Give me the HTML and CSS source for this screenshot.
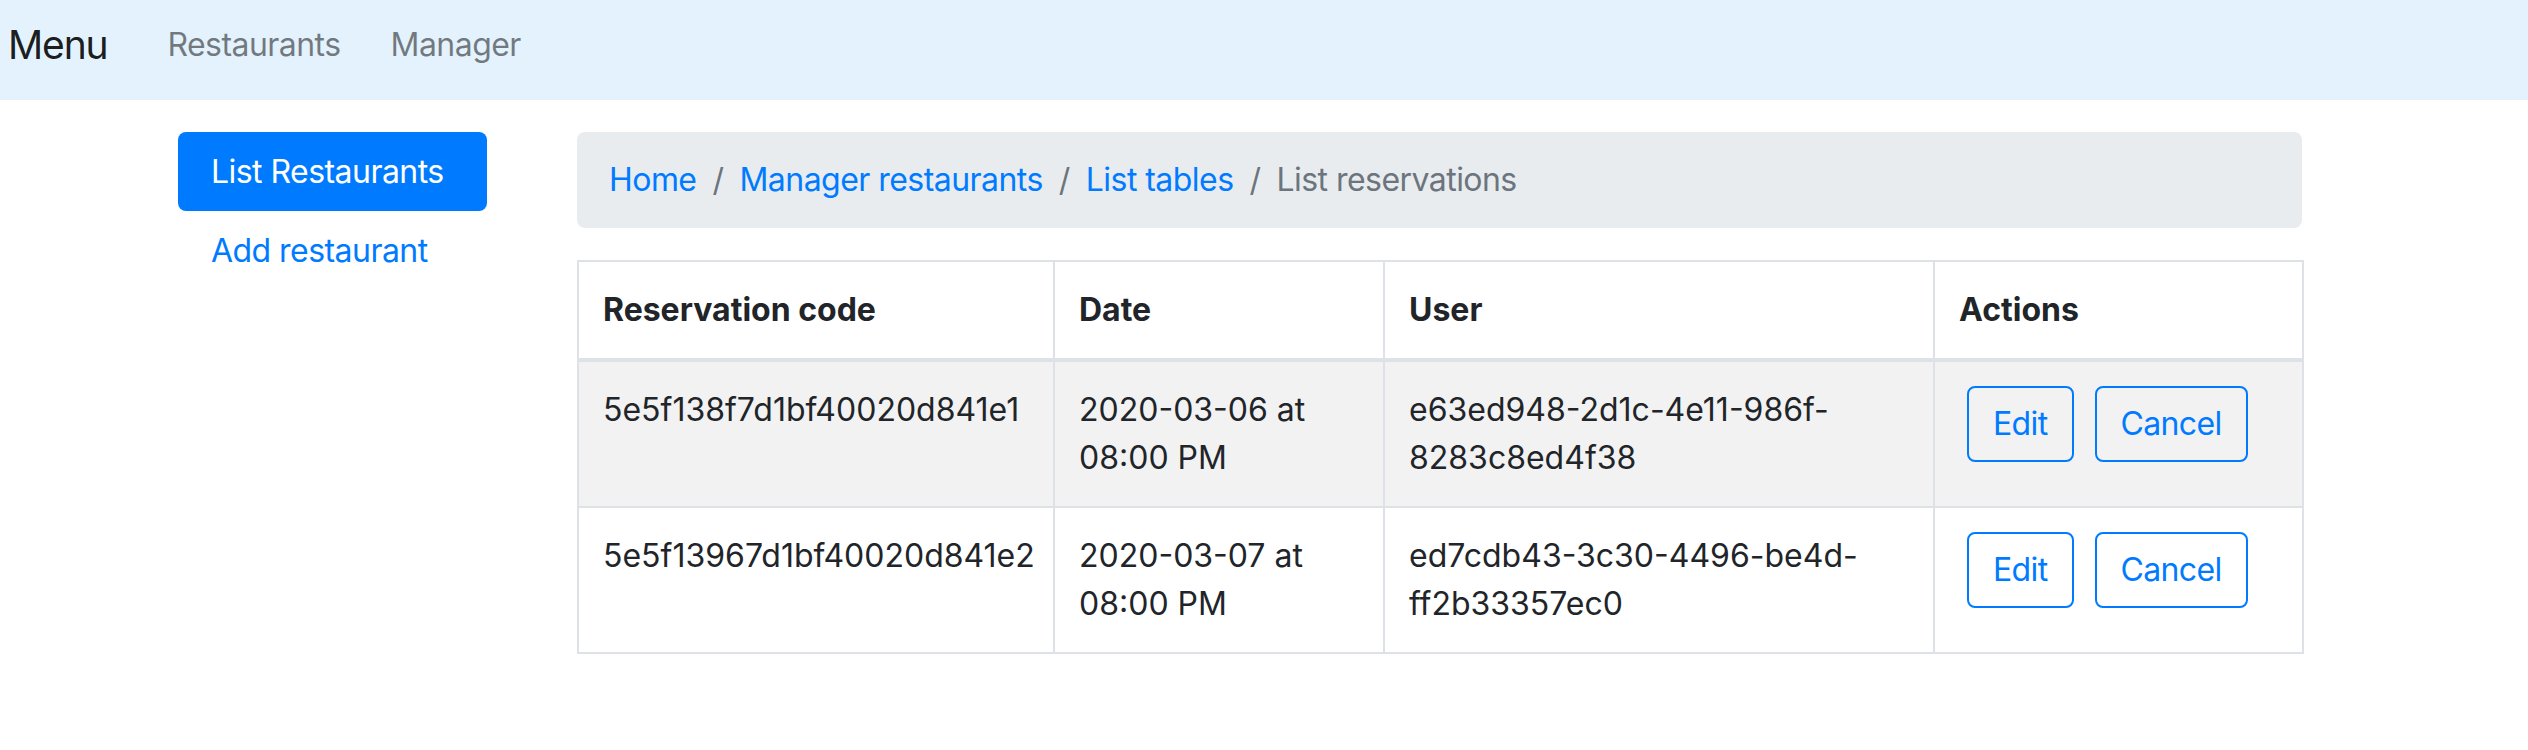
FILE: index.html
```html
<!DOCTYPE html>
<html lang="en">
<head>
<meta charset="utf-8">
<title>List reservations</title>
<link rel="stylesheet" href="styles.css">
</head>
<body>
<nav class="navbar">
  <a class="brand" href="#">Menu</a>
  <ul class="nav-links">
    <li><a href="#">Restaurants</a></li>
    <li><a href="#">Manager</a></li>
  </ul>
</nav>
<div class="page">
  <aside class="sidebar">
    <a class="pill active" href="#">List Restaurants</a>
    <a class="pill" href="#">Add restaurant</a>
  </aside>
  <main class="content">
    <ol class="breadcrumb">
      <li class="crumb"><a href="#">Home</a></li>
      <li class="crumb"><a href="#">Manager restaurants</a></li>
      <li class="crumb"><a href="#">List tables</a></li>
      <li class="crumb current">List reservations</li>
    </ol>
    <table class="table">
      <colgroup>
        <col class="c1"><col class="c2"><col class="c3"><col class="c4">
      </colgroup>
      <thead>
        <tr><th>Reservation code</th><th>Date</th><th>User</th><th>Actions</th></tr>
      </thead>
      <tbody>
        <tr class="odd">
          <td>5e5f138f7d1bf40020d841e1</td>
          <td>2020-03-06 at<br>08:00 PM</td>
          <td>e63ed948-2d1c-4e11-986f-<br>8283c8ed4f38</td>
          <td><div class="actions"><a class="btn" href="#">Edit</a><a class="btn" href="#">Cancel</a></div></td>
        </tr>
        <tr>
          <td>5e5f13967d1bf40020d841e2</td>
          <td>2020-03-07 at<br>08:00 PM</td>
          <td>ed7cdb43-3c30-4496-be4d-<br>ff2b33357ec0</td>
          <td><div class="actions"><a class="btn" href="#">Edit</a><a class="btn" href="#">Cancel</a></div></td>
        </tr>
      </tbody>
    </table>
  </main>
</div>
</body>
</html>
```
FILE: styles.css
```css
* { box-sizing: border-box; }
html, body { margin: 0; padding: 0; }
body {
  font-family: "Inter", "Roboto", "Liberation Sans", sans-serif;
  font-size: 32px;
  line-height: 48px;
  color: #212529;
  background: #fff;
  letter-spacing: -0.017em;
}
a { text-decoration: none; color: #007bff; }

.navbar {
  height: 100px;
  background: #e3f2fd;
  display: flex;
  align-items: center;
  padding: 0 0 10px 8px;
}
.brand {
  font-size: 39px;
  line-height: 60px;
  letter-spacing: -0.03em;
  color: rgba(0, 0, 0, 0.9);
  margin-right: 35px;
}
.nav-links {
  list-style: none;
  margin: 0;
  padding: 0;
  display: flex;
}
.nav-links a {
  display: block;
  padding: 16px 25px;
  color: rgba(0, 0, 0, 0.5);
}

.page {
  display: flex;
  align-items: flex-start;
  padding: 32px 0 0 178px;
  gap: 90px;
}
.sidebar {
  width: 309px;
  display: flex;
  flex-direction: column;
}
.pill {
  display: block;
  padding: 16px 33px;
  border-radius: 8px;
  line-height: 47px;
}
.pill.active {
  background: #007bff;
  color: #fff;
}

.content {
  width: 1725px;
}
.breadcrumb {
  list-style: none;
  margin: 0 0 32px;
  padding: 24px 32px;
  background: #e9ecef;
  border-radius: 8px;
  display: flex;
}
.crumb + .crumb::before {
  content: "/";
  color: #6c757d;
  padding: 0 16px;
}
.crumb.current { color: #6c757d; }

.table {
  width: 100%;
  border-collapse: collapse;
  table-layout: fixed;
}
.c1 { width: 476px; }
.c2 { width: 330px; }
.c3 { width: 550px; }
.c4 { width: 369px; }
.table th, .table td {
  border: 2px solid #dee2e6;
  padding: 24px;
  text-align: left;
  vertical-align: top;
  letter-spacing: 0;
}
.table th {
  font-weight: 700;
  border-bottom-width: 4px;
}
.table tr.odd td { background: #f2f2f2; }

.actions {
  display: flex;
  gap: 21px;
  padding-left: 8px;
}
.btn {
  display: inline-block;
  border: 2px solid #007bff;
  border-radius: 8px;
  padding: 12px 24px;
  line-height: 48px;
  letter-spacing: -0.02em;
  color: #007bff;
}
```
